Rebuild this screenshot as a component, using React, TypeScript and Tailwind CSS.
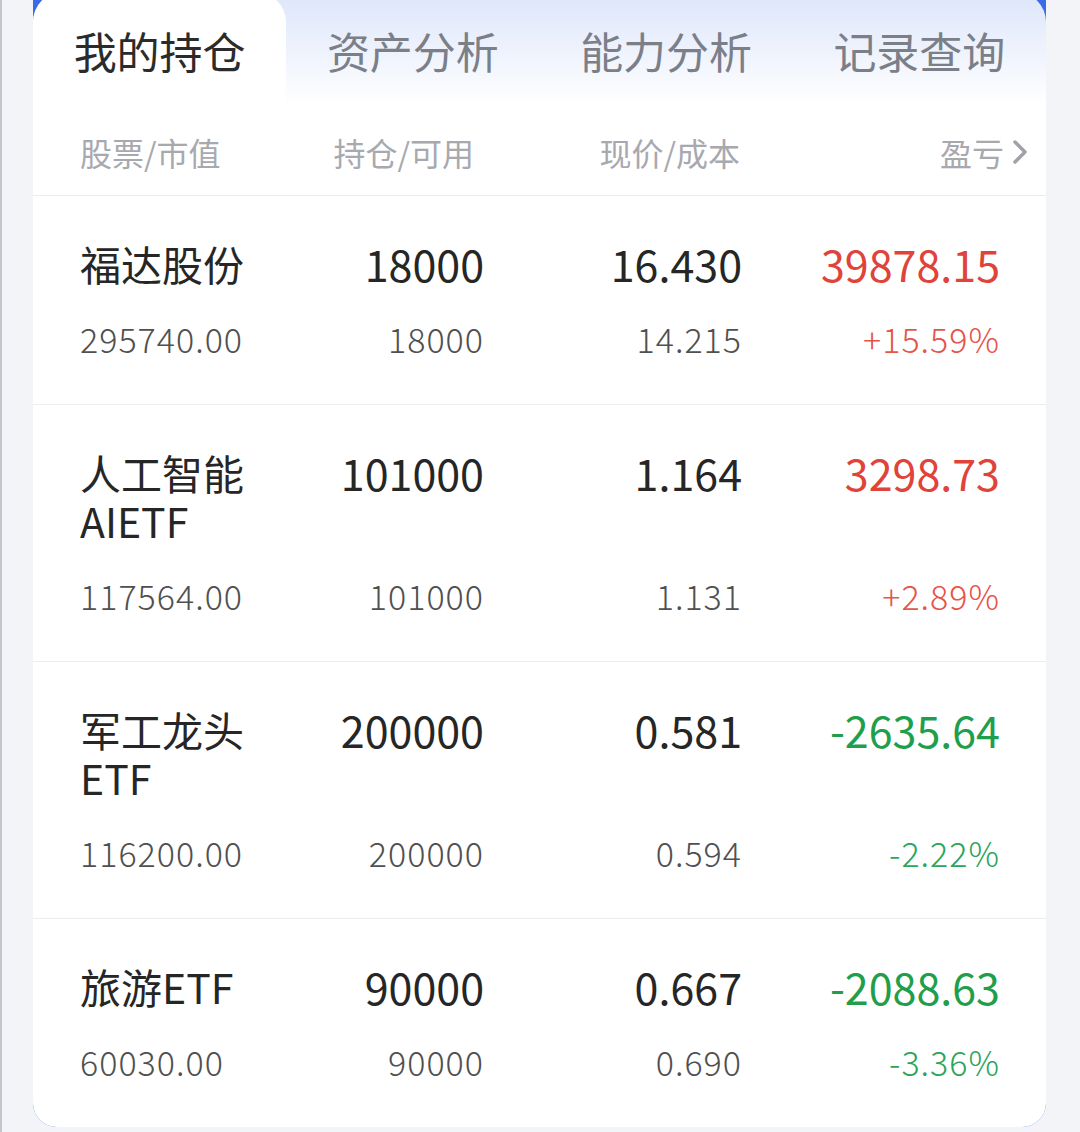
import React from "react";

type Holding = {
  name: string;
  marketValue: string;
  position: string;
  available: string;
  price: string;
  cost: string;
  pnl: string;
  pnlPct: string;
  up: boolean;
};

const holdings: Holding[] = [
  { name: "福达股份", marketValue: "295740.00", position: "18000", available: "18000", price: "16.430", cost: "14.215", pnl: "39878.15", pnlPct: "+15.59%", up: true },
  { name: "人工智能AIETF", marketValue: "117564.00", position: "101000", available: "101000", price: "1.164", cost: "1.131", pnl: "3298.73", pnlPct: "+2.89%", up: true },
  { name: "军工龙头ETF", marketValue: "116200.00", position: "200000", available: "200000", price: "0.581", cost: "0.594", pnl: "-2635.64", pnlPct: "-2.22%", up: false },
  { name: "旅游ETF", marketValue: "60030.00", position: "90000", available: "90000", price: "0.667", cost: "0.690", pnl: "-2088.63", pnlPct: "-3.36%", up: false },
];

const tabs = ["我的持仓", "资产分析", "能力分析", "记录查询"];

const font = { fontFamily: '"Noto Sans CJK SC", "Noto Sans", sans-serif' };

const Row = ({ h, last }: { h: Holding; last: boolean }) => (
  <div
    className={`grid grid-cols-[170px_234px_258px_258px] pl-[47px] pr-[46px] pt-[43px] pb-[45px] ${
      last ? "" : "border-b border-[#ededed]"
    }`}
  >
    {/* top line */}
    <div className="text-[41px] leading-[48px] text-[#262626] break-all">{h.name}</div>
    <div className="text-right text-[43px] leading-[48px] text-[#262626]">{h.position}</div>
    <div className="text-right text-[43px] leading-[48px] text-[#262626]">{h.price}</div>
    <div className={`text-right text-[43px] leading-[48px] ${h.up ? "text-[#e0433a]" : "text-[#1f9e4b]"}`}>
      {h.pnl}
    </div>

    {/* second line */}
    <div className="mt-[32px] text-[34px] leading-[40px] tracking-[1px] font-light text-[#505050]">{h.marketValue}</div>
    <div className="mt-[32px] text-right text-[34px] leading-[40px] tracking-[1px] font-light text-[#505050]">{h.available}</div>
    <div className="mt-[32px] text-right text-[34px] leading-[40px] tracking-[1px] font-light text-[#505050]">{h.cost}</div>
    <div
      className={`mt-[32px] text-right text-[34px] leading-[40px] tracking-[1px] font-light ${
        h.up ? "text-[#e6544a]" : "text-[#2aa55a]"
      }`}
    >
      {h.pnlPct}
    </div>
  </div>
);

export default function App() {
  return (
    <div
      className="h-[1132px] w-[1080px] overflow-hidden bg-[#f3f4f8] border-l-2 border-[#c3c6cd] pl-[31px] pr-[34px]"
      style={font}
    >
      <div className="-mt-[8px] rounded-b-[24px] overflow-hidden bg-[#3a6be9]">
        {/* tabs */}
        <div className="grid grid-cols-4 h-[113px] rounded-t-[30px] bg-gradient-to-b from-[#dce5fa] to-[#ffffff]">
          {tabs.map((t, i) => (
            <div
              key={t}
              className={`flex justify-center pt-[35px] text-[43px] leading-[46px] ${
                i === 0 ? "bg-white rounded-t-[30px] text-[#2b2b2b]" : "text-[#7b7f88]"
              }`}
            >
              {t}
            </div>
          ))}
        </div>

        <div className="bg-white">
          {/* column labels */}
          <div className="grid grid-cols-[170px_234px_258px_258px] pl-[47px] pr-[46px] h-[91px] pt-[27px] border-b border-[#ececec] text-[32px] leading-[40px] text-[#a7a9af]">
            <div>股票/市值</div>
            <div className="text-right pr-[10px]">持仓/可用</div>
            <div className="text-right pr-[2px]">现价/成本</div>
            <div className="flex justify-end items-center h-[40px] -mr-[30px]">
              <span>盈亏</span>
              <svg width="20" height="30" viewBox="0 0 20 30" className="ml-[6px]">
                <path d="M5 5 L15 15 L5 25" fill="none" stroke="#a0a2a8" strokeWidth="3.5" strokeLinecap="round" strokeLinejoin="round" />
              </svg>
            </div>
          </div>

          {holdings.map((h, i) => (
            <Row key={h.name} h={h} last={i === holdings.length - 1} />
          ))}
        </div>
      </div>
    </div>
  );
}
